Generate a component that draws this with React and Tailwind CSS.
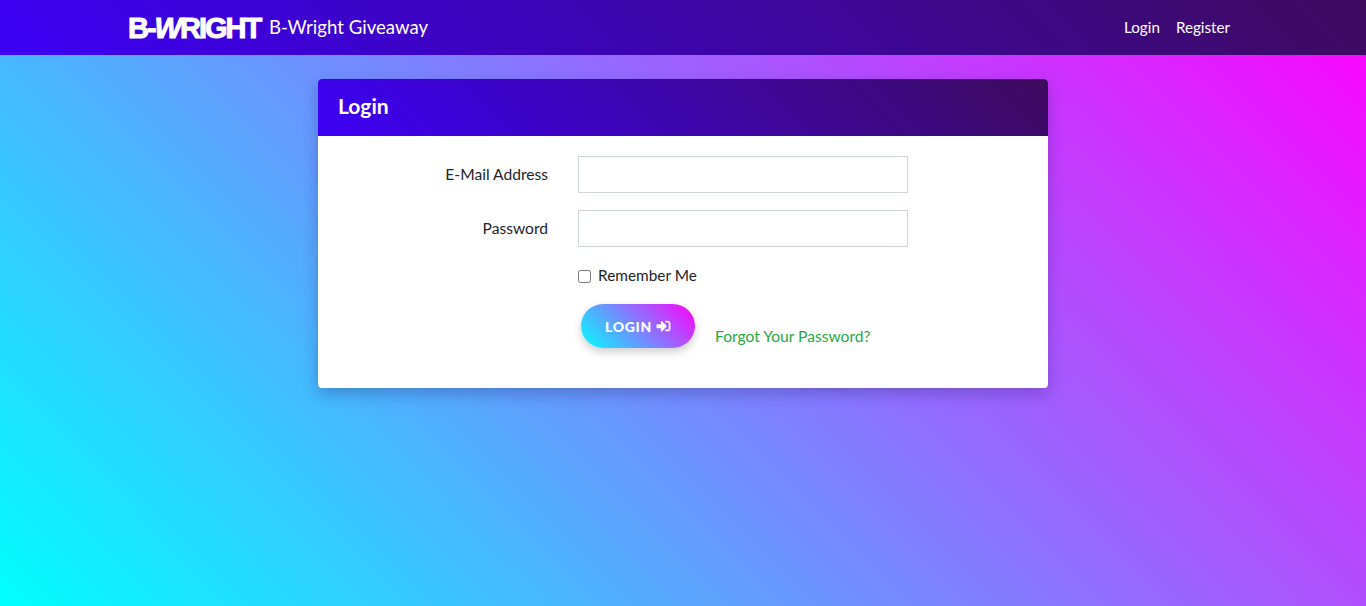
import React from "react";
import { FaSignInAlt } from "react-icons/fa";

export default function App() {
  return (
    <div className="min-h-[606px] flex flex-col bg-[linear-gradient(45deg,#00ffff,#ff00ff)] font-['Lato','Noto_Sans',sans-serif] text-[#212529] text-[15.6px]">
      <nav className="h-[55px] shrink-0 bg-[linear-gradient(45deg,#3c00f5,#3e0b5e)] text-white">
        <div className="w-[1110px] mx-auto h-full flex items-center justify-between">
          <div className="flex items-center">
            <span className="w-[134px] pt-[2px] flex items-baseline text-[29px] leading-none font-black tracking-[-2px] font-['Liberation_Sans',sans-serif] [-webkit-text-stroke:1px_white] whitespace-nowrap">
              <span>B-</span>
              <span className="italic">W</span>
              <span>RIGHT</span>
            </span>
            <span className="ml-[7px] text-[18.6px] leading-none">B-Wright Giveaway</span>
          </div>
          <div className="flex items-center gap-4 pr-[8px] text-[15.2px]">
            <a>Login</a>
            <a>Register</a>
          </div>
        </div>
      </nav>
      <main className="mt-6 w-[730px] mx-auto">
        <div className="rounded overflow-hidden bg-white shadow-[0_6px_16px_rgba(40,30,100,0.3)]">
          <div className="h-[57px] px-5 pb-[3px] flex items-center bg-[linear-gradient(45deg,#3c00f5,#3e0b5e)] text-white text-[21px] font-bold">
            Login
          </div>
          <form className="pt-5 pb-10 flex flex-col">
            <div className="flex items-center gap-[30px] mb-[17px]">
              <label className="w-[230px] text-right">E-Mail Address</label>
              <input type="email" className="w-[330px] h-[37px] border border-[#ced4da] bg-white" />
            </div>
            <div className="flex items-center gap-[30px] mb-[17px]">
              <label className="w-[230px] text-right">Password</label>
              <input type="password" className="w-[330px] h-[37px] border border-[#ced4da] bg-white" />
            </div>
            <label className="ml-[260px] flex items-center h-[24px] mb-[16px] text-[15.4px]">
              <input type="checkbox" className="w-[13px] h-[13px]" />
              <span className="ml-[7px]">Remember Me</span>
            </label>
            <div className="ml-[263px] flex items-end">
              <button type="button" className="w-[114px] h-[44px] rounded-full flex items-center justify-center gap-1 text-white text-[14px] font-black tracking-[0.7px] bg-[linear-gradient(45deg,#00ffff,#ff00ff)] shadow-[0_4px_10px_rgba(0,0,0,0.2)]">
                LOGIN <FaSignInAlt className="w-[15px] h-[14px]" />
              </button>
              <a className="ml-[20px] text-[#28a745]">Forgot Your Password?</a>
            </div>
          </form>
        </div>
      </main>
    </div>
  );
}
